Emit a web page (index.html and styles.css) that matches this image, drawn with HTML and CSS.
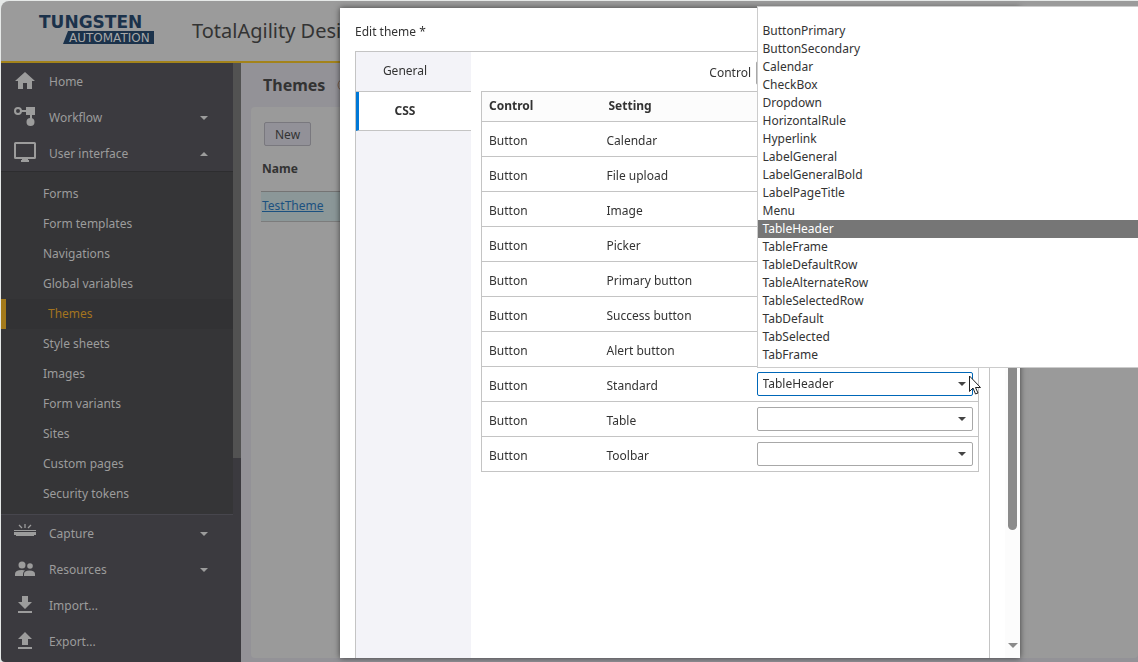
FILE: index.html
```html
<!DOCTYPE html>
<html lang="en">
    <head>
        <meta charset="utf-8">
        <title>TotalAgility Designer</title>
        <meta name="viewport" content="width=device-width, initial-scale=1.0">
        <link rel="stylesheet" href="styles.css">
    </head>
    <body>
        <div class="app">
            <header class="header">
                <svg class="logo" width="120" height="34" viewBox="0 0 120 34" role="img" aria-label="Tungsten Automation">
                    <text class="logo-top" x="2" y="14">TUNGSTEN</text>
                    <polygon class="logo-bar" points="31,17 117,17 117,30 26,30"/>
                    <text class="logo-bottom" x="32" y="28">AUTOMATION</text>
                </svg>
                <span class="product">TotalAgility Designer</span>
            </header>

            <div class="body">
                <aside class="sidebar">
                    <nav class="nav">
                        <a class="nav-item" href="#">
                            <svg class="icon" viewBox="0 0 24 24"><path d="M12 2 2 11h3v8h5v-6h4v6h5v-8h3z"/></svg>
                            <span>Home</span>
                        </a>
                        <a class="nav-item" href="#">
                            <svg class="icon" viewBox="0 0 24 24"><circle cx="5" cy="5" r="3" fill="none" stroke="currentColor" stroke-width="2"/><path d="M8 4h5V1h9v8h-3v4h-2V9h-4V6H8z"/><circle cx="17.500" cy="16" r="4"/></svg>
                            <span>Workflow</span>
                            <i class="caret down"></i>
                        </a>
                        <a class="nav-item" href="#">
                            <svg class="icon" viewBox="0 0 24 24"><path d="M2.500 0h19Q23 0 23 1.500v14Q23 17 21.500 17H15v1h1v2H8v-2h1v-1H2.500Q1 17 1 15.500v-14Q1 0 2.500 0zM3 2v13h18V2z" fill-rule="evenodd"/></svg>
                            <span>User interface</span>
                            <i class="caret up"></i>
                        </a>
                        <div class="submenu">
                            <a href="#">Forms</a>
                            <a href="#">Form templates</a>
                            <a href="#">Navigations</a>
                            <a href="#">Global variables</a>
                            <a class="current" href="#">Themes</a>
                            <a href="#">Style sheets</a>
                            <a href="#">Images</a>
                            <a href="#">Form variants</a>
                            <a href="#">Sites</a>
                            <a href="#">Custom pages</a>
                            <a href="#">Security tokens</a>
                        </div>
                        <a class="nav-item" href="#">
                            <svg class="icon" viewBox="0 0 24 24"><path d="M1 8h22v1H1zM1 10h22v3h-2v1H3v-1H1z"/><path d="M6 3l3 3M12 2v4M18 3l-3 3" stroke="currentColor" stroke-width="1.300" fill="none"/></svg>
                            <span>Capture</span>
                            <i class="caret down"></i>
                        </a>
                        <a class="nav-item" href="#">
                            <svg class="icon" viewBox="0 0 24 24"><circle cx="9" cy="7" r="3.500"/><circle cx="17" cy="8" r="2.800"/><path d="M2 18v-2q0-4 7-4 2 0 3 .5-2 1-2 3.500v2zM11 18v-2q0-3.500 5.500-3.500T22 16v2z"/></svg>
                            <span>Resources</span>
                            <i class="caret down"></i>
                        </a>
                        <a class="nav-item" href="#">
                            <svg class="icon" viewBox="0 0 24 24"><path d="M9 2h6v6h4l-7 7-7-7h4zM5 17h14v2H5z"/></svg>
                            <span>Import...</span>
                        </a>
                        <a class="nav-item" href="#">
                            <svg class="icon" viewBox="0 0 24 24"><path d="M12 2l7 7h-4v6H9V9H5zM5 17h14v2H5z"/></svg>
                            <span>Export...</span>
                        </a>
                    </nav>
                    <div class="nav-scroll"><div class="nav-thumb"></div></div>
                </aside>

                <main class="main">
                    <h1>Themes <svg class="help" viewBox="0 0 14 14"><circle cx="7" cy="7" r="6"/></svg></h1>
                    <section class="card">
                        <button class="new" type="button">New</button>
                        <table class="themes">
                            <thead><tr><th>Name</th></tr></thead>
                            <tbody><tr><td><a href="#">TestTheme</a></td></tr></tbody>
                        </table>
                    </section>
                </main>
            </div>
        </div>

        <div class="overlay">
            <div class="dialog" role="dialog" aria-labelledby="dialog-title">
                <div class="dialog-body">
                    <h2 id="dialog-title">Edit theme *</h2>
                    <div class="panel">
                        <div class="tabs" role="tablist">
                            <button class="tab" type="button" role="tab">General</button>
                            <button class="tab active" type="button" role="tab" aria-selected="true">CSS</button>
                        </div>
                        <div class="content">
                            <div class="filter">
                                <label for="filter">Control</label>
                                <span class="select"><select id="filter"><option></option></select></span>
                            </div>
                            <table class="settings">
                                <thead>
                                    <tr><th class="col-control">Control</th><th class="col-setting">Setting</th><th></th></tr>
                                </thead>
                                <tbody>
                                    <tr><td>Button</td><td>Calendar</td><td></td></tr>
                                    <tr><td>Button</td><td>File upload</td><td></td></tr>
                                    <tr><td>Button</td><td>Image</td><td></td></tr>
                                    <tr><td>Button</td><td>Picker</td><td></td></tr>
                                    <tr><td>Button</td><td>Primary button</td><td></td></tr>
                                    <tr><td>Button</td><td>Success button</td><td></td></tr>
                                    <tr><td>Button</td><td>Alert button</td><td></td></tr>
                                    <tr>
                                        <td>Button</td>
                                        <td><label for="standard">Standard</label></td>
                                        <td>
                                            <span class="select open">
                                                <select id="standard"><option>TableHeader</option></select>
                                                <ul class="options">
                                                    <li>ButtonPrimary</li>
                                                    <li>ButtonSecondary</li>
                                                    <li>Calendar</li>
                                                    <li>CheckBox</li>
                                                    <li>Dropdown</li>
                                                    <li>HorizontalRule</li>
                                                    <li>Hyperlink</li>
                                                    <li>LabelGeneral</li>
                                                    <li>LabelGeneralBold</li>
                                                    <li>LabelPageTitle</li>
                                                    <li>Menu</li>
                                                    <li class="selected">TableHeader</li>
                                                    <li>TableFrame</li>
                                                    <li>TableDefaultRow</li>
                                                    <li>TableAlternateRow</li>
                                                    <li>TableSelectedRow</li>
                                                    <li>TabDefault</li>
                                                    <li>TabSelected</li>
                                                    <li>TabFrame</li>
                                                </ul>
                                                <svg class="cursor" viewBox="0 0 12 20"><path d="M.5 1v15.500l3.500-3.500 2.500 6 2.500-1-2.500-5.500h5z"/></svg>
                                            </span>
                                        </td>
                                    </tr>
                                    <tr>
                                        <td>Button</td>
                                        <td><label for="table">Table</label></td>
                                        <td><span class="select"><select id="table"><option></option></select></span></td>
                                    </tr>
                                    <tr>
                                        <td>Button</td>
                                        <td><label for="toolbar">Toolbar</label></td>
                                        <td><span class="select"><select id="toolbar"><option></option></select></span></td>
                                    </tr>
                                </tbody>
                            </table>
                        </div>
                    </div>
                </div>
                <div class="dialog-scroll">
                    <div class="dialog-thumb"></div>
                    <i class="dialog-arrow"></i>
                </div>
            </div>
        </div>
    </body>
</html>
```

FILE: styles.css
```css
* {
    box-sizing: border-box;
}

body {
    margin: 0;
    background-color: #e6e9e8;
    font-family: "Noto Sans", "Open Sans", sans-serif;
    font-size: 12px;
    line-height: 18px;
    color: #333;
}

select,
button {
    font: inherit;
    color: inherit;
}

.app {
    display: flex;
    flex-direction: column;
    height: 100vh;
    padding: 1px 0 0 1px;
}

.header {
    display: flex;
    align-items: center;
    height: 62px;
    padding-left: 36px;
    background-color: #9b9b9b;
    border-bottom: 2px solid #a3831b;
    border-top-left-radius: 8px;
}

.logo-top,
.logo-bottom {
    font-family: "DejaVu Sans", sans-serif;
}

.logo-top {
    font-size: 17px;
    font-weight: 700;
    fill: #1b324b;
}

.logo-bar {
    fill: #1b324b;
}

.logo-bottom {
    font-size: 12px;
    fill: #a8a8a8;
}

.product {
    margin-left: 35px;
    font-size: 20px;
    line-height: 28px;
}

.body {
    flex: 1;
    display: flex;
    min-height: 0;
}

/* sidebar */
.sidebar {
    display: flex;
    width: 240px;
    background-color: #3b3a3f;
    border-bottom-left-radius: 4px;
}

.nav {
    flex: 1;
}

.nav a {
    display: flex;
    align-items: center;
    color: #9c9c9c;
    text-decoration: none;
}

.nav-item {
    height: 36px;
    padding: 2px 25px 0 12px;
}

.icon {
    width: 24px;
    height: 24px;
    margin-right: 12px;
    fill: currentColor;
}

.caret {
    margin-left: auto;
    border: 4px solid transparent;
}

.caret.down {
    border-top-color: #9c9c9c;
    border-bottom: 0;
}

.caret.up {
    border-bottom-color: #9c9c9c;
    border-top: 0;
}

.submenu {
    padding: 7px 0 5px;
    background-color: #353537;
    border-top: 1px solid #2d2d2f;
    border-bottom: 1px solid #47464d;
}

.submenu a {
    height: 30px;
    padding-left: 42px;
}

.submenu .current {
    background-color: #323234;
    border-left: 5px solid #a37a1b;
    color: #a3741f;
}

.nav-scroll {
    width: 8px;
}

.nav-thumb {
    height: 66%;
    background-color: #525252;
}

/* page behind the dialog */
.main {
    flex: 1;
    display: flex;
    flex-direction: column;
    padding: 0 0 4px 10px;
    background-color: #939297;
}

h1 {
    display: flex;
    align-items: center;
    height: 44px;
    margin: 0;
    padding-left: 12px;
    font-size: 16px;
    line-height: 24px;
}

.help {
    width: 14px;
    height: 14px;
    margin-left: 12px;
    fill: none;
    stroke: #7a5c44;
}

.card {
    flex: 1;
    padding: 15px 0 0 10px;
    background-color: #9a9a9a;
    border-radius: 4px;
}

.new {
    display: block;
    height: 24px;
    margin-left: 3px;
    padding: 2px 10px 0;
    background-color: #929198;
    border: 1px solid #79787e;
    border-radius: 2px;
    color: #333;
}

.themes {
    width: 100%;
    margin-top: 1px;
    border-collapse: collapse;
}

.themes th,
.themes td {
    padding: 0 1px;
    text-align: left;
}

.themes th {
    height: 44px;
}

.themes td {
    height: 30px;
    background-color: #8b9798;
    border-top: 1px solid #747474;
    border-bottom: 1px solid #7c7c7c;
}

.themes a {
    color: #1b5180;
}

/* dialog */
.overlay {
    position: fixed;
    inset: 0;
    display: flex;
    padding: 8px 118px 4px 340px;
}

.dialog {
    flex: 1;
    display: flex;
    background-color: #fff;
    box-shadow: 0 0 6px rgba(0, 0, 0, 0.6);
}

.dialog-body {
    flex: 1;
    display: flex;
    flex-direction: column;
    padding: 15px 15px 0 15px;
}

h2 {
    margin: 0 0 10px;
    font-size: 12px;
    font-weight: 400;
    line-height: 18px;
}

.panel {
    flex: 1;
    display: flex;
    border: 1px solid #c4c4c4;
    border-bottom: 0;
}

.tabs {
    width: 115px;
    background-color: #f3f3f8;
}

.tab {
    display: block;
    width: 100%;
    height: 40px;
    padding: 0 17px 2px 0;
    background: none;
    border: 0;
    border-bottom: 1px solid #c4c4c4;
}

.tab.active {
    height: 39px;
    padding: 0 20px 0 0;
    background-color: #fff;
    border-left: 3px solid #0078d7;
    font-weight: 700;
}

.content {
    flex: 1;
    padding: 9px 10px 0;
}

.filter {
    display: flex;
    align-items: center;
    justify-content: flex-end;
    gap: 5px;
    margin: 0 7px 6px 0;
}

.select {
    position: relative;
    display: block;
    width: 216px;
}

.select::after {
    content: "";
    position: absolute;
    top: 10px;
    right: 7px;
    border: 4px solid transparent;
    border-top-color: #444;
    border-bottom: 0;
}

.select select {
    appearance: none;
    display: block;
    width: 100%;
    height: 24px;
    padding: 0 20px 0 5px;
    background-color: #fff;
    border: 1px solid #a8a8a8;
    border-radius: 2px;
}

.select.open select {
    border-color: #0067b8;
}

.settings {
    width: 100%;
    border: 1px solid #c4c4c4;
    border-collapse: collapse;
}

.settings th,
.settings td {
    height: 35px;
    padding: 0 0 0 7px;
    border-bottom: 1px solid #c4c4c4;
    text-align: left;
}

.settings td {
    padding-top: 4px;
}

.settings th {
    height: 30px;
    padding-bottom: 2px;
    background-color: #fcfcfc;
}

.settings .col-control {
    width: 118px;
}

.settings .col-setting {
    width: 150px;
    padding-left: 9px;
}

.settings td:last-child {
    padding-top: 0;
}

.options {
    position: absolute;
    z-index: 1;
    left: 0;
    bottom: 28px;
    width: 400px;
    margin: 0;
    padding: 15px 0 3px;
    background-color: #fff;
    border: 1px solid #ccc;
    list-style: none;
}

.options li {
    padding-left: 5px;
}

.options .selected {
    background-color: #767676;
    color: #fff;
}

.cursor {
    position: absolute;
    z-index: 1;
    top: 3px;
    left: 212px;
    width: 12px;
    height: 20px;
    fill: #fff;
    stroke: #222;
}

/* dialog scrollbar */
.dialog-scroll {
    display: flex;
    flex-direction: column;
    align-items: center;
    justify-content: space-between;
    width: 15px;
    padding: 18px 0 10px;
    background-color: #fcfcfc;
}

.dialog-thumb {
    width: 9px;
    height: 81%;
    background-color: #8b8b8b;
    border-radius: 5px;
}

.dialog-arrow {
    border: 5px solid transparent;
    border-top-color: #8b8b8b;
    border-bottom: 0;
}
```
